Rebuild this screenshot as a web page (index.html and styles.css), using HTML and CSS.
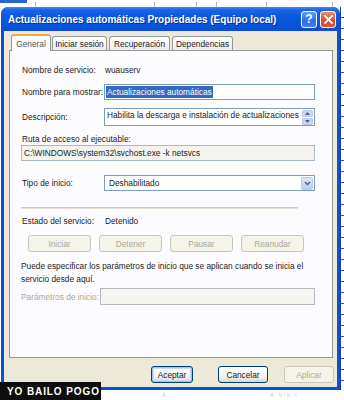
FILE: index.html
```html
<!DOCTYPE html>
<html lang="es">
<head>
  <meta charset="UTF-8">
  <meta name="viewport" content="width=device-width, initial-scale=1.0">
  <title>Actualizaciones automáticas Propiedades</title>
  <link rel="stylesheet" href="styles.css">
</head>
<body>
  <!-- what is left of the window behind, above the dialog -->
  <div class="backdrop-top">
    <span class="bg-tab"></span>
    <span class="tick" style="width: 9px"></span>
    <span class="tick" style="width: 119px"></span>
    <span class="tick" style="width: 42px"></span>
    <span class="tick" style="width: 20px"></span>
    <span class="tick" style="width: 50px"></span>
    <span class="tick" style="width: 66px"></span>
  </div>

  <div class="scene">
    <div class="window">
      <div class="titlebar">
        <span class="title">Actualizaciones automáticas Propiedades (Equipo local)</span>
        <div class="caption-btns">
          <span class="cap-btn help">?</span>
          <span class="cap-btn close">
            <svg width="9" height="9" viewBox="0 0 9 9"><path d="M1 1 L8 8 M8 1 L1 8" stroke="#fff" stroke-width="1.8" stroke-linecap="square"/></svg>
          </span>
        </div>
      </div>

      <div class="client">
        <div class="tabs">
          <span class="tab active">General</span>
          <span class="tab">Iniciar sesión</span>
          <span class="tab">Recuperación</span>
          <span class="tab">Dependencias</span>
        </div>

        <div class="panel">
          <div class="row row-name">
            <span class="label">Nombre de servicio:</span>
            <span class="value">wuauserv</span>
          </div>
          <div class="row row-display">
            <span class="label">Nombre para mostrar:</span>
            <div class="textbox"><span class="selected">Actualizaciones automáticas</span></div>
          </div>
          <div class="row row-desc">
            <span class="label">Descripción:</span>
            <div class="textbox multiline">
              <span class="desc-text">Habilita la descarga e instalación de actualizaciones</span>
              <div class="spinner">
                <span class="spin-btn"><svg width="5" height="3" viewBox="0 0 5 3"><path d="M0 3 L2.5 0 L5 3 Z" fill="#4d6185"/></svg></span>
                <span class="spin-btn"><svg width="5" height="3" viewBox="0 0 5 3"><path d="M0 0 L2.5 3 L5 0 Z" fill="#4d6185"/></svg></span>
              </div>
            </div>
          </div>

          <div class="path-label">Ruta de acceso al ejecutable:</div>
          <div class="textbox readonly">C:\WINDOWS\system32\svchost.exe -k netsvcs</div>

          <div class="row row-start">
            <span class="label">Tipo de inicio:</span>
            <div class="combo">
              <span>Deshabilitado</span>
              <span class="combo-btn">
                <svg width="7" height="5" viewBox="0 0 7 5"><path d="M1 1 L3.5 3.5 L6 1" fill="none" stroke="#4d6185" stroke-width="1.5"/></svg>
              </span>
            </div>
          </div>

          <div class="separator"></div>

          <div class="row row-state">
            <span class="label">Estado del servicio:</span>
            <span class="value">Detenido</span>
          </div>

          <div class="service-btns">
            <span class="btn disabled">Iniciar</span>
            <span class="btn disabled">Detener</span>
            <span class="btn disabled">Pausar</span>
            <span class="btn disabled">Reanudar</span>
          </div>

          <p class="hint">Puede especificar los parámetros de inicio que se aplican cuando se inicia el servicio desde aquí.</p>

          <div class="row row-params">
            <span class="label disabled-text">Parámetros de inicio:</span>
            <div class="textbox inactive"></div>
          </div>
        </div>

        <div class="dialog-btns">
          <span class="btn default">Aceptar</span>
          <span class="btn">Cancelar</span>
          <span class="btn disabled">Aplicar</span>
        </div>
      </div>
    </div>
    <div class="backdrop-right"></div>
  </div>

  <div class="backdrop-bottom">
    <span class="ghost" style="margin-left: 162px">Á</span>
    <span class="ghost" style="margin-left: 104px">A · b l lt · l</span>
  </div>

  <div class="watermark">YO BAILO POGO</div>
</body>
</html>
```

FILE: styles.css
```css
* {
  box-sizing: border-box;
}
body {
  margin: 0;
  width: 344px;
  height: 400px;
  overflow: hidden;
  position: relative;
  background: #fff;
  font-family: "Liberation Sans", Arial, sans-serif;
  font-size: 8.3px;
  color: #222;
}

/* background window */
.backdrop-top {
  display: flex;
  height: 7px;
}
.bg-tab {
  width: 27px;
  height: 3px;
  background: #2a62d8;
}
.tick {
  height: 5px;
  margin-top: 2px;
  border-right: 1px solid #b8b8b8;
}
.backdrop-right {
  width: 4px;
  height: 383px;
  border-left: 1px solid #1a3e9e;
  background: repeating-linear-gradient(to bottom, #fff 0, #fff 10px, #2d55b8 10px, #2d55b8 11px);
}
.backdrop-bottom {
  display: flex;
  height: 10px;
  align-items: center;
  font-size: 6px;
  color: #c8c8c8;
}

.scene {
  display: flex;
}

/* dialog window */
.window {
  width: 339px;
  height: 383px;
  margin-left: 1px;
  background: #0b4fd8;
  border-radius: 7px 7px 0 0;
  padding: 0 3px 3px;
  display: flex;
  flex-direction: column;
}
.titlebar {
  height: 24px;
  margin: 0 -3px;
  padding: 0 4px 0 7px;
  border-radius: 7px 7px 0 0;
  background: linear-gradient(to bottom, #3f8cf3 0, #1a64e6 3px, #0a58e0 10px, #0655dd 18px, #0a4cd2 24px);
  display: flex;
  align-items: center;
  justify-content: space-between;
}
.title {
  color: #fff;
  font-weight: bold;
  font-size: 10px;
  text-shadow: 1px 1px 0 #0b2c8c;
  white-space: nowrap;
}
.caption-btns {
  display: flex;
  gap: 3px;
}
.cap-btn {
  width: 16px;
  height: 17px;
  border: 1px solid #fff;
  border-radius: 3px;
  display: flex;
  align-items: center;
  justify-content: center;
  color: #fff;
  font-weight: bold;
  font-size: 12px;
}
.cap-btn.help {
  background: linear-gradient(to bottom, #5d9cfb, #2a6ef0 60%, #3b7ef4);
}
.cap-btn.close {
  background: linear-gradient(to bottom, #f08a6a, #dc4b1f 60%, #e05a2c);
}

.client {
  flex: 1;
  background: #ece9d8;
  padding: 3px 4px 0 5px;
}

/* tabs */
.tabs {
  display: flex;
  align-items: flex-end;
  height: 16px;
  padding-left: 2px;
  gap: 1px;
}
.tab {
  height: 14px;
  padding: 0 4px;
  border: 1px solid #919b9c;
  border-bottom: none;
  border-radius: 3px 3px 0 0;
  background: linear-gradient(to bottom, #fff, #ecebe6);
  display: flex;
  align-items: center;
  justify-content: center;
  white-space: nowrap;
}
.tab:nth-child(2) { width: 55px; }
.tab:nth-child(3) { width: 61px; margin-left: 1px; }
.tab:nth-child(4) { width: 61px; margin-left: 1px; }
.tab.active {
  width: 40px;
  height: 17px;
  margin-bottom: -1px;
  position: relative;
  background: #fcfcfe;
  border-top: 2px solid #f3a83a;
  color: #555;
}

.panel {
  height: 308px;
  border: 1px solid #919b9c;
  background: #fcfcfe;
  padding: 11px 0 0 11px;
  display: flex;
  flex-direction: column;
}
.row {
  display: flex;
  align-items: center;
}
.label {
  width: 83px;
  padding-left: 1px;
  white-space: nowrap;
}
.value {
  padding-left: 1px;
}
.row-name { height: 16px; }
.row-display { margin-top: 6px; }
.row-desc { margin-top: 8px; }
.textbox {
  width: 211px;
  height: 16px;
  border: 1px solid #7f9db9;
  background: #fff;
  display: flex;
  align-items: center;
  padding-left: 1px;
  white-space: nowrap;
}
.selected {
  background: #316ac5;
  color: #fff;
  padding: 1px 1px;
}
.textbox.multiline {
  height: 18px;
  align-items: flex-start;
  justify-content: space-between;
  padding: 1px 1px 0 2px;
}
.spinner {
  display: flex;
  flex-direction: column;
  gap: 1px;
}
.spin-btn {
  width: 11px;
  height: 7px;
  background: #c9d8f6;
  border: 1px solid #b4c8f0;
  border-radius: 1px;
  display: flex;
  align-items: center;
  justify-content: center;
}
.path-label {
  margin-top: 8px;
  height: 11px;
  padding-left: 1px;
}
.textbox.readonly {
  width: 294px;
  background: #f4f3ee;
  border-color: #a9b8c8;
  padding-left: 2px;
}
.row-start { margin-top: 14px; }
.combo {
  width: 211px;
  height: 16px;
  border: 1px solid #7f9db9;
  background: #fff;
  display: flex;
  align-items: center;
  justify-content: space-between;
  padding: 0 1px 0 4px;
}
.combo-btn {
  width: 12px;
  height: 13px;
  background: linear-gradient(to bottom, #dce6fb, #b8cdf6);
  border: 1px solid #b4c8f0;
  border-radius: 2px;
  display: flex;
  align-items: center;
  justify-content: center;
}
.separator {
  width: 277px;
  margin-top: 16px;
  border-top: 1px solid #cfccbd;
  border-bottom: 1px solid #e4e2d6;
}
.row-state {
  margin-top: 6px;
  height: 12px;
}

.btn {
  height: 17px;
  border: 1px solid #003c74;
  border-radius: 3px;
  background: linear-gradient(to bottom, #fff, #f0efe8 70%, #d9d6c8);
  display: flex;
  align-items: center;
  justify-content: center;
}
.btn.disabled {
  border-color: #c9c7ba;
  background: #f5f4ea;
  color: #aca899;
}
.btn.default {
  box-shadow: inset 0 0 0 1px #a5c2f5, inset 0 0 0 2px #cadbfa;
}
.service-btns {
  display: flex;
  gap: 8px;
  margin-top: 8px;
  padding-left: 7px;
}
.service-btns .btn {
  width: 63px;
}
.hint {
  margin: 8px 0 0;
  width: 300px;
  line-height: 13px;
}
.disabled-text {
  color: #aca899;
}
.row-params {
  margin-top: 2px;
}
.row-params .label {
  width: 79px;
  padding-left: 0;
}
.textbox.inactive {
  width: 215px;
  height: 17px;
  border-color: #b5b8bd;
  background: #f6f5f0;
}

.dialog-btns {
  display: flex;
  justify-content: flex-end;
  margin-top: 8px;
}
.dialog-btns .btn {
  width: 50px;
}
.dialog-btns .btn.default {
  width: 42px;
  margin-right: 9px;
}
.dialog-btns .btn + .btn {
  margin-left: 16px;
}
.dialog-btns .btn.disabled {
  margin-right: -1px;
}

/* overlay caption of the photo */
.watermark {
  position: absolute;
  left: 0;
  bottom: 0;
  width: 101px;
  height: 18px;
  background: #0d0d0d;
  color: #fff;
  font-weight: bold;
  font-size: 10px;
  letter-spacing: 0.9px;
  padding-left: 7px;
  display: flex;
  align-items: center;
}
```
